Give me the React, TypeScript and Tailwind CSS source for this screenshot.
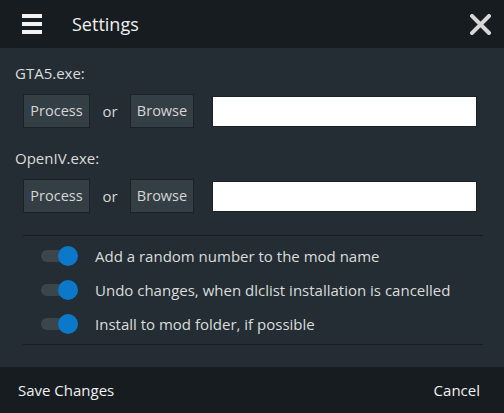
import React from 'react';

const font = { fontFamily: '"Open Sans", "Noto Sans", sans-serif' };

function PathRow({ label }: { label: string }) {
  return (
    <div className="flex flex-col">
      <div className="h-[20px] pl-[15px] text-[15px] leading-[20px] text-[#dcdcdc]">{label}</div>
      <div className="mt-[11px] flex items-center pl-[23px]">
        <button className="flex h-[34px] w-[67px] items-center justify-center border border-[#1b2125] bg-[#343e45] text-[14.5px] text-[#d6d6d6]">
          Process
        </button>
        <span className="w-[40px] text-center text-[15px] text-[#d6d6d6]">or</span>
        <button className="flex h-[34px] w-[64px] items-center justify-center border border-[#1b2125] bg-[#343e45] text-[14.5px] text-[#d6d6d6]">
          Browse
        </button>
        <input
          type="text"
          className="ml-[18px] h-[31px] w-[265px] border border-[#1b2125] bg-white outline-none"
        />
      </div>
    </div>
  );
}

function Toggle({ label }: { label: string }) {
  return (
    <div className="flex h-[34px] items-center">
      <div className="relative ml-[18px] h-[20px] w-[37px]">
        <div className="absolute left-0 top-[4px] h-[12px] w-[30px] rounded-full bg-[#3b454c]" />
        <div className="absolute right-0 top-0 h-[20px] w-[20px] rounded-full bg-[#0b78c9]" />
      </div>
      <span className="ml-[17px] text-[15px] text-[#dcdcdc]">{label}</span>
    </div>
  );
}

export default function App() {
  return (
    <div className="flex h-[413px] w-[504px] flex-col bg-[#232d33]" style={font}>
      {/* Header */}
      <header className="flex h-[48px] shrink-0 items-center bg-[#161c20]">
        <div className="ml-[22px] flex w-[20px] flex-col gap-[4px]">
          <div className="h-[4px] bg-[#f2f2f2]" />
          <div className="h-[4px] bg-[#f2f2f2]" />
          <div className="h-[4px] bg-[#f2f2f2]" />
        </div>
        <h1 className="ml-[30px] flex-1 text-[18px] text-[#f0f0f0]">Settings</h1>
        <svg className="mr-[13px] h-[21px] w-[21px]" viewBox="0 0 21 21">
          <path d="M2 2 L19 19 M19 2 L2 19" stroke="#d6d6d6" strokeWidth="4" strokeLinecap="square" />
        </svg>
      </header>

      {/* Body */}
      <main className="flex flex-1 flex-col pt-[15px]">
        <PathRow label="GTA5.exe:" />
        <div className="h-[20px]" />
        <PathRow label="OpenIV.exe:" />

        <div className="ml-[23px] mr-[21px] mt-[22px] border-t border-[#161c20]">
          <div className="flex flex-col pt-[3px] pb-[3px]">
            <Toggle label="Add a random number to the mod name" />
            <Toggle label="Undo changes, when dlclist installation is cancelled" />
            <Toggle label="Install to mod folder, if possible" />
          </div>
        </div>
        <div className="ml-[23px] mr-[21px] border-t border-[#161c20]" />
      </main>

      {/* Footer */}
      <footer className="flex h-[46px] shrink-0 items-center justify-between bg-[#161c20] px-[18px] pr-[24px] text-[15px] text-[#f0f0f0]">
        <span>Save Changes</span>
        <span>Cancel</span>
      </footer>
    </div>
  );
}
